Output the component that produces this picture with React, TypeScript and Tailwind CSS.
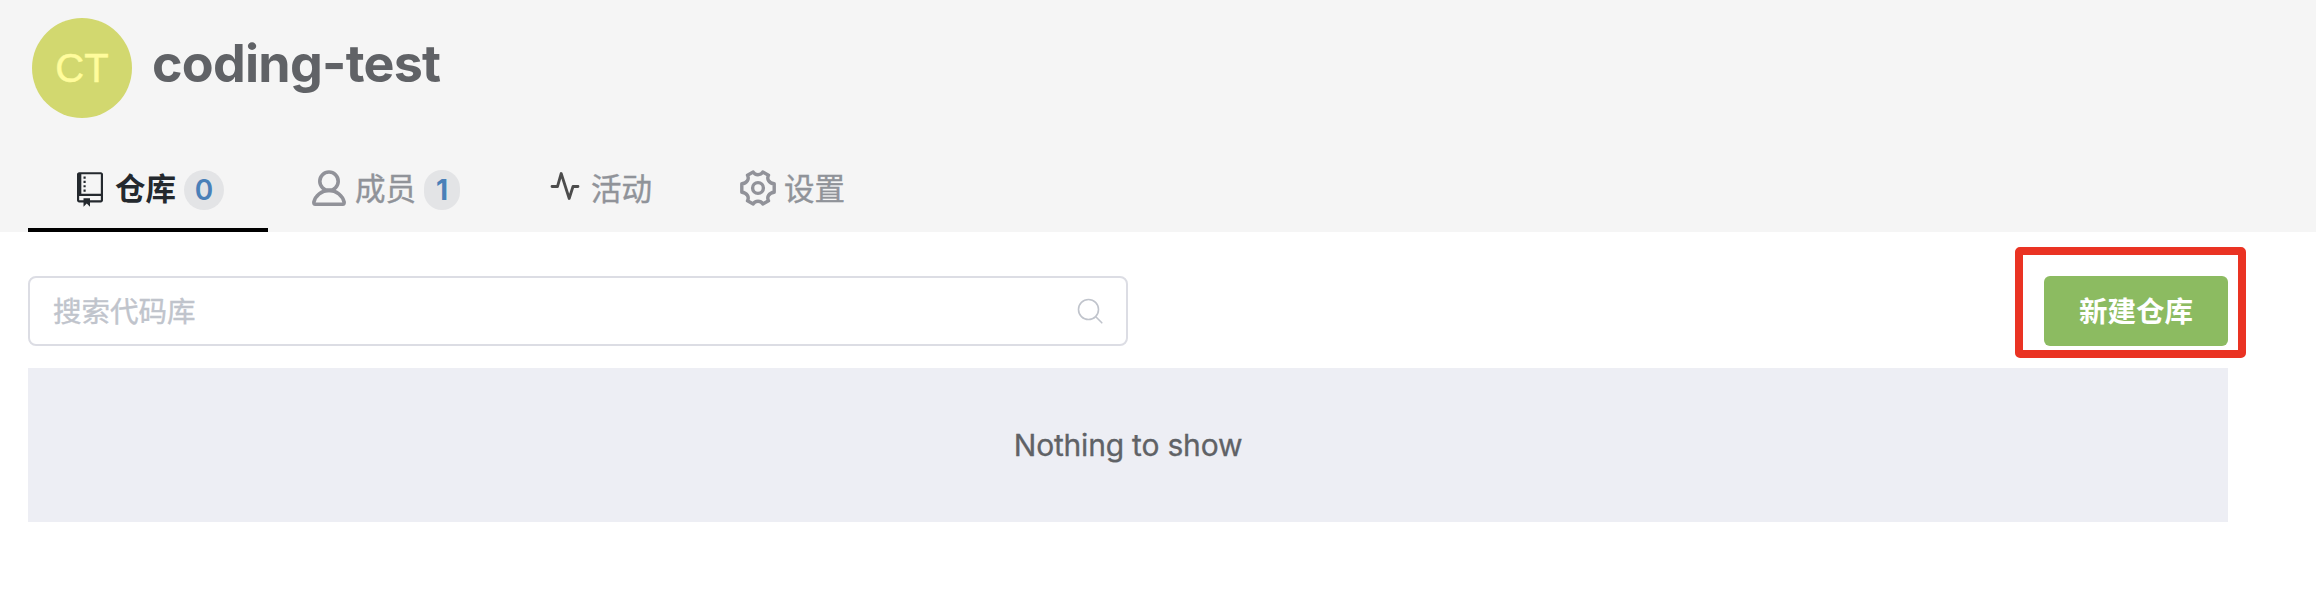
import React from "react";

const RepoIcon = () => (
  <svg className="h-[35px] w-[26px]" viewBox="0 0 12 16" fill="#24292e">
    <path d="M4 9H3V8h1v1zm0-3H3v1h1V6zm0-2H3v1h1V4zm0-2H3v1h1V2zm8-1v12c0 .55-.45 1-1 1H6v2l-1.5-1.5L3 16v-2H1c-.55 0-1-.45-1-1V1c0-.55.45-1 1-1h10c.55 0 1 .45 1 1zm-1 10H1v2h2v-1h3v1h5v-2zm0-10H2v9h9V1z" />
  </svg>
);

const UserIcon = () => (
  <svg className="h-9 w-[34px]" viewBox="0 0 34 36" fill="none" stroke="#919299" strokeWidth="3.6" strokeLinejoin="round">
    <circle cx="17" cy="11.2" r="9.2" />
    <path d="M17 20.400C9.500 20.400 3.400 25.600 1.900 32c-.2 1.500.3 2.200 1.400 2.200h27.400c1.100 0 1.600-.7 1.400-2.200C30.600 25.600 24.500 20.400 17 20.400z" />
  </svg>
);

const ActivityIcon = () => (
  <svg className="h-[30px] w-[30px]" viewBox="0 0 30 30" fill="none" stroke="#4c4c4c" strokeWidth="2.8" strokeLinecap="round" strokeLinejoin="round">
    <path d="M2 15.500h5.500L11.200 2.500l8 25L23 15.500H28" />
  </svg>
);

const GearIcon = () => (
  <svg className="h-9 w-9" viewBox="0 0 36 36" fill="none" stroke="#919299" strokeWidth="3.4" strokeLinejoin="round">
    <path d="M13.200 2 C15 5.600 21 5.600 22.800 2 L28.500 5.200 C26.500 9 29 13.400 34.200 13.800 L34.200 22.200 C29 22.600 26.500 27 28.500 30.800 L22.800 34 C21 30.400 15 30.400 13.200 34 L7.500 30.800 C9.500 27 7 22.600 1.800 22.200 L1.800 13.800 C7 13.400 9.500 9 7.500 5.200 Z" />
    <circle cx="18" cy="18" r="5.400" />
  </svg>
);

export default function App() {
  return (
    <div className="h-[598px] w-[2316px] bg-white font-['Inter','Noto_Sans_CJK_SC',sans-serif]">
      <header className="flex h-[232px] flex-col justify-between bg-[#f5f5f5] pt-[18px] pl-7">
        <div className="flex gap-5 pl-1">
          <div className="flex h-[100px] w-[100px] items-center justify-center rounded-full bg-[#d2d86f] font-['Liberation_Sans',sans-serif] text-[40px] text-[#fffc9c] [-webkit-text-stroke:0.5px_#fffc9c]">
            CT
          </div>
          <h1 className="mt-[13px] text-[52px] leading-[66px] font-bold tracking-[-0.75px] text-[#606266]">coding-test</h1>
        </div>
        <nav className="flex h-[84px] text-[30.5px] leading-[38px] text-[#909399]">
          <div className="flex w-60 shrink-0 border-b-4 border-black pt-[22px] pl-[49px] font-bold text-[#24292e]">
            <div className="mt-[2px] mr-3"><RepoIcon /></div>
            <span>仓库</span>
            <span className="ml-2 flex h-10 w-10 items-center justify-center rounded-full bg-[#e3e4e6] text-[28px] font-semibold text-[#4a80b8]">0</span>
          </div>
          <div className="flex w-[240px] shrink-0 pt-[22px] pl-[44px]">
            <div className="mr-[9px]"><UserIcon /></div>
            <span className="[-webkit-text-stroke:0.4px_#909399]">成员</span>
            <span className="ml-2 flex h-10 w-9 items-center justify-center rounded-full bg-[#e3e4e6] text-[28px] font-bold text-[#4a80b8]">1</span>
          </div>
          <div className="flex w-[190px] shrink-0 pt-[22px] pl-[42px]">
            <div className="mt-px mr-[11px]"><ActivityIcon /></div>
            <span className="[-webkit-text-stroke:0.4px_#909399]">活动</span>
          </div>
          <div className="flex shrink-0 pt-[22px] pl-[42px]">
            <div className="mr-2"><GearIcon /></div>
            <span className="[-webkit-text-stroke:0.4px_#909399]">设置</span>
          </div>
        </nav>
      </header>
      <main className="w-[2228px] pt-11 pl-7">
        <div className="flex h-[70px] justify-between">
          <div className="flex w-[1100px] items-center justify-between rounded-lg border-2 border-[#dcdde4] pr-[23px] pl-[23px] text-[28.5px] text-[#c0c4cc]">
            <span className="pt-[2px] [-webkit-text-stroke:0.4px_#c0c4cc]">搜索代码库</span>
            <svg className="h-[26px] w-[26px]" viewBox="0 0 26 26" fill="none" stroke="#c0c4cc" strokeWidth="1.6" strokeLinecap="round">
              <circle cx="11.500" cy="11.500" r="10" />
              <path d="M18.800 18.800l6 6" />
            </svg>
          </div>
          <div className="relative">
            <button className="h-[70px] w-[184px] rounded-[6px] bg-[#8cbb61] pt-[2px] text-[28.5px] font-bold text-white">新建仓库</button>
            <div className="absolute -top-[29px] -left-[29px] h-[111px] w-[231px] rounded-[5px] border-8 border-[#ea3323]" />
          </div>
        </div>
        <div className="mt-[22px] flex h-[154px] items-center justify-center bg-[#edeef4] text-[30px] tracking-[-0.2px] text-[#606266] [-webkit-text-stroke:0.3px_#606266]">
          Nothing to show
        </div>
      </main>
    </div>
  );
}
